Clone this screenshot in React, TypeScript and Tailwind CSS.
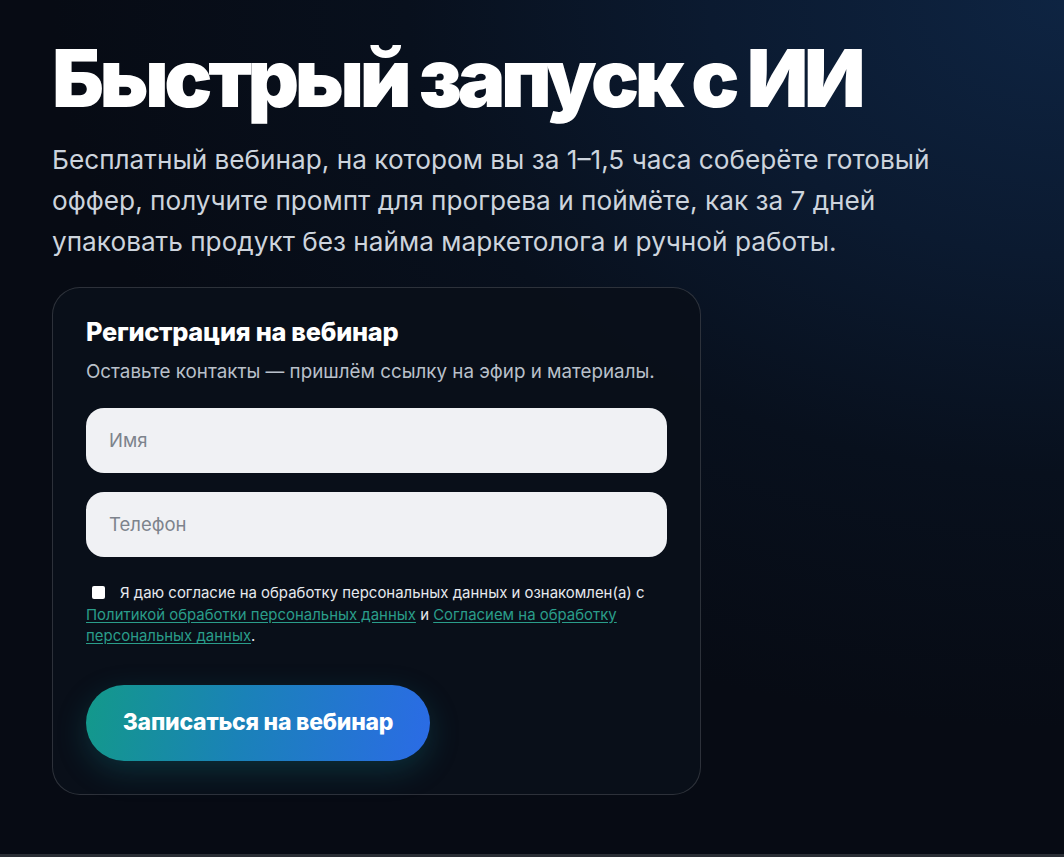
import React from "react";

export default function App() {
  return (
    <div className="relative w-full h-[857px] overflow-hidden bg-[#070b14] bg-[radial-gradient(ellipse_95%_85%_at_100%_0%,#0e2442_0%,#0b1a30_35%,#08101d_65%,#070b14_100%)] font-['Inter',sans-serif]">
      <div className="flex flex-col pl-[52px] pt-[38px]">
        <h1 className="text-[80px] leading-[1] font-black tracking-[-0.055em] text-white">
          Быстрый запуск с ИИ
        </h1>
        <p className="mt-[21px] w-[920px] text-[26.2px] leading-[41px] text-[#cdd4dd]">
          Бесплатный вебинар, на котором вы за 1–1,5 часа соберёте готовый оффер, получите промпт для прогрева и поймёте, как за 7 дней упаковать продукт без найма маркетолога и ручной работы.
        </p>
        <div className="mt-[25px] w-[649px] h-[508px] rounded-[28px] border border-[#ffffff26] bg-[#0a0f19e6] px-[33px] pt-[29px]">
          <h2 className="text-[25.3px] leading-[30px] font-extrabold text-white tracking-[-0.01em]">Регистрация на вебинар</h2>
          <p className="mt-[13px] text-[18.8px] leading-[24px] text-[#b9c0ca]">
            Оставьте контакты — пришлём ссылку на эфир и материалы.
          </p>
          <div className="mt-[24px] flex flex-col gap-[19px]">
            <div className="h-[65px] rounded-[18px] bg-[#f0f1f4] flex items-center px-[23px] text-[18.5px] text-[#7d838c]">Имя</div>
            <div className="h-[65px] rounded-[18px] bg-[#f0f1f4] flex items-center px-[23px] text-[18.5px] text-[#7d838c]">Телефон</div>
          </div>
          <div className="mt-[26px] text-[14.95px] leading-[21.5px] text-[#e6e9ee]">
            <span className="inline-block w-[13px] h-[13px] rounded-[2px] bg-white ml-[6px] mr-[15px] align-[-1px]"></span>
            Я даю согласие на обработку персональных данных и ознакомлен(а) с{" "}
            <span className="text-[#2a9d8a] underline underline-offset-2">Политикой обработки персональных данных</span> и{" "}
            <span className="text-[#2a9d8a] underline underline-offset-2">Согласием на обработку персональных данных</span>.
          </div>
          <button className="mt-[37px] h-[76px] w-[344px] rounded-full bg-[linear-gradient(100deg,#13998a_0%,#1a82b8_45%,#2b6be6_100%)] shadow-[0_10px_30px_rgba(20,140,150,0.25)] text-white text-[23px] font-extrabold tracking-[-0.01em]">
            Записаться на вебинар
          </button>
        </div>
      </div>
      <div className="absolute bottom-0 left-0 right-0 h-[3px] bg-[#2a2e35]"></div>
    </div>
  );
}
